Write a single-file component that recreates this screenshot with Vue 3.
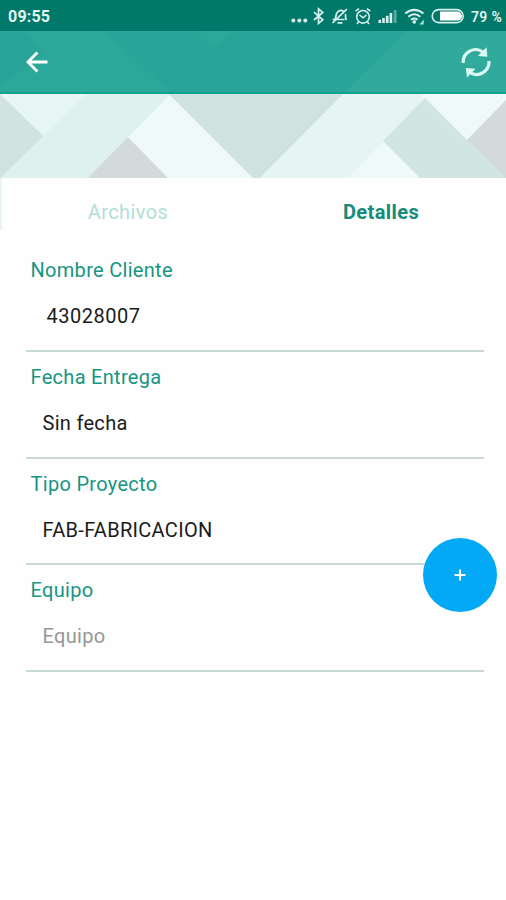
<script setup>
import { ref } from 'vue'

const activeTab = ref('detalles')

const tabs = [
  { id: 'archivos', label: 'Archivos' },
  { id: 'detalles', label: 'Detalles' },
]

const fields = [
  { id: 'cliente', label: 'Nombre Cliente', value: '43028007' },
  { id: 'fecha', label: 'Fecha Entrega', value: 'Sin fecha' },
  { id: 'tipo', label: 'Tipo Proyecto', value: 'FAB-FABRICACION' },
  { id: 'equipo', label: 'Equipo', value: '', placeholder: 'Equipo' },
]
</script>

<template>
  <div class="screen">
    <div class="status-bar">
      <span class="clock">09:55</span>
      <svg class="status-icons" width="176" height="31" viewBox="290 0 176 31" fill="none" stroke="#d9f0ec">
        <!-- notificaciones -->
        <g fill="#d9f0ec" stroke="none">
          <circle cx="293.3" cy="20.6" r="2" />
          <circle cx="299.3" cy="20.6" r="2" />
          <circle cx="305.3" cy="20.6" r="2" />
        </g>
        <!-- bluetooth -->
        <path d="M314 12.2L322.8 19.8L318.5 23.4V8.8L322.8 12.4L314 20" stroke-width="1.7" />
        <!-- silencio -->
        <path d="M332.5 19.5H344.5M335 19C336.5 17 335.5 15 337 12.8C338.5 10.3 341 9.8 343.5 11M345.5 14C345.8 16 344.8 18 346.5 20M337.5 22.8H342.5M332.5 23L346.8 9.2" stroke-width="1.7" />
        <!-- alarma -->
        <circle cx="363" cy="16.8" r="6.3" stroke-width="1.6" />
        <path d="M359.5 15L363 17.8L366.5 15M355.6 11.2L359 8.6M367 8.6L370.4 11.2M358.5 22L357 24M367.5 22L369 24" stroke-width="1.6" />
        <!-- señal -->
        <g fill="#d9f0ec" stroke="none">
          <rect x="378.5" y="19.8" width="2.6" height="3.2" />
          <rect x="382.2" y="18" width="2.6" height="5" />
          <rect x="385.9" y="15.8" width="2.6" height="7.2" />
          <rect x="389.6" y="13" width="2.6" height="10" />
          <rect x="393.6" y="10" width="3" height="13" opacity="0.4" />
        </g>
        <!-- wifi -->
        <path d="M405.2 13.5Q414.3 6.3 423.4 13.5M408.3 16.8Q414.3 11.8 420.3 16.8M411 19.7Q414.3 17.2 417.6 19.7" stroke-width="2" />
        <circle cx="414.3" cy="21.9" r="1.8" fill="#d9f0ec" stroke="none" />
        <path d="M423.8 19.5V24.5H419.3Z" fill="#a9d8d0" stroke="none" />
        <!-- bateria -->
        <rect x="432.2" y="9.6" width="31" height="13" rx="6.5" stroke-width="1.6" />
        <path d="M440 11.6H457.5A4.5 4.5 0 0 1 457.5 20.6H440Z" fill="#fff" stroke="none" />
      </svg>
      <span class="battery">79 %</span>
    </div>

    <header class="toolbar">
      <svg class="toolbar-bg" viewBox="0 0 506 63" preserveAspectRatio="none">
        <path d="M25 0H105L170 63H0V58L43 22Z" fill="#2ca89b" />
        <path d="M195 0H232L213 18Z" fill="#2ca89b" />
        <path d="M408 0H506V63H345Z" fill="#30aa9d" />
      </svg>
      <svg class="back" width="24" height="24" viewBox="0 0 24 24">
        <path d="M22.5 12H3.2M12.4 2.6L3 12L12.4 21.4" />
      </svg>
      <svg class="refresh" width="32" height="32" viewBox="0 0 32 32">
        <path class="arc" d="M3.2 17A12.5 12.5 0 0 1 23.2 6.2" />
        <path class="head" d="M26.5 1.2L27.4 10.8L17.8 10Z" />
        <path class="arc" d="M29 15A12.6 12.6 0 0 1 10 26.6" />
        <path class="head" d="M5.8 22L15.5 22.8L7 31.5Z" />
      </svg>
    </header>

    <svg class="banner" viewBox="0 0 506 84" preserveAspectRatio="none">
      <rect width="506" height="84" fill="#dff1ee" />
      <path d="M0 0L43.5 42L0 84Z" fill="#d0e3e0" />
      <path d="M0 0H86L43.5 42Z" fill="#e7f6f4" />
      <path d="M128 43L88 84H168Z" fill="#d3dad9" />
      <path d="M169.5 1L128 43L168 84H253Z" fill="#eff9f8" />
      <path d="M169 0H343L260 84H253Z" fill="#d0e2df" />
      <path d="M343 0H430V84H260Z" fill="#e6f5f2" />
      <path d="M383 47L349 84H420Z" fill="#eff9f8" />
      <path d="M421 0H506V84H460Z" fill="#eff9f8" />
      <path d="M425 4L383 47L420 84H505Z" fill="#d1e5e2" />
      <path d="M506 6L467 46L505 84H506Z" fill="#d3dad9" />
    </svg>

    <nav class="tabs">
      <button
        v-for="tab in tabs"
        :key="tab.id"
        class="tab"
        :class="{ active: activeTab === tab.id }"
        @click="activeTab = tab.id"
      >
        {{ tab.label }}
      </button>
    </nav>

    <main class="fields">
      <div v-for="field in fields" :key="field.id" class="field" :class="field.id">
        <div class="label">{{ field.label }}</div>
        <div class="value" :class="{ empty: !field.value }">
          {{ field.value || field.placeholder }}
        </div>
      </div>
    </main>

    <button class="fab">
      <svg width="12" height="12" viewBox="0 0 12 12">
        <path d="M6 0.5V11.5M0.5 6H11.5" />
      </svg>
    </button>
  </div>
</template>

<style>
body {
  margin: 0;
  background: #fefefe;
}
</style>

<style scoped>
.screen {
  position: relative;
  width: 506px;
  height: 900px;
  overflow: hidden;
  background: #fefefe;
  font-family: Roboto, "Liberation Sans", sans-serif;
}

button {
  padding: 0;
  border: 0;
  background: none;
  font-family: inherit;
}

.status-bar {
  display: flex;
  align-items: center;
  height: 31px;
  padding-left: 8px;
  background: #00796b;
  color: #e3f5f2;
  font-weight: 700;
}

.clock {
  font-size: 16px;
  line-height: 31px;
  padding-top: 2px;
  letter-spacing: 0.2px;
}

.status-icons {
  margin-left: auto;
}

.battery {
  width: 40px;
  padding-left: 5px;
  box-sizing: border-box;
  font-size: 14px;
  font-weight: 600;
  padding-top: 2px;
  letter-spacing: 0.3px;
  white-space: nowrap;
}

.toolbar {
  position: relative;
  display: flex;
  align-items: center;
  justify-content: space-between;
  box-sizing: border-box;
  height: 63px;
  padding: 0 14px 0 25px;
  background: #29a498;
  border-bottom: 2px solid #12a08f;
}

.toolbar-bg {
  position: absolute;
  top: 0;
  left: 0;
  width: 100%;
  height: 100%;
}

.back,
.refresh {
  position: relative;
}

.back path {
  fill: none;
  stroke: #fff;
  stroke-width: 2.8;
}

.arc {
  fill: none;
  stroke: #dcf8f4;
  stroke-width: 3.2;
}

.head {
  fill: #dcf8f4;
}

.banner {
  display: block;
  width: 100%;
  height: 84px;
}

.tabs {
  display: flex;
  height: 67.4px;
  background: linear-gradient(#e8f6f3, #e8f6f3) 0 0 / 2px 52px no-repeat;
}

.tab {
  flex: 1;
  height: 68px;
  padding-left: 3px;
  color: #b2dfd5;
  font-size: 20px;
  letter-spacing: 0.4px;
}

.tab.active {
  color: #148c79;
  font-weight: 700;
}

.fields {
  padding: 0 22px 0 26px;
}

.field {
  box-sizing: border-box;
  height: 106.7px;
  padding-top: 12px;
  border-bottom: 2px solid #c6d9d5;
}

.label {
  padding-left: 4.5px;
  color: #179581;
  font-size: 20px;
  line-height: 26px;
  letter-spacing: 0.3px;
}

.value {
  padding: 20px 0 0 16.5px;
  color: #1b1b1b;
  font-size: 20px;
  line-height: 26px;
  letter-spacing: 0.3px;
}

.cliente .value {
  padding-left: 20.5px;
  letter-spacing: 0.5px;
}

.value.empty {
  color: #969696;
}

.fab {
  position: absolute;
  right: 9px;
  top: 538px;
  display: flex;
  align-items: center;
  justify-content: center;
  width: 74px;
  height: 74px;
  border-radius: 50%;
  background: #03a9f4;
}

.fab path {
  fill: none;
  stroke: #fff;
  stroke-width: 2;
}
</style>
